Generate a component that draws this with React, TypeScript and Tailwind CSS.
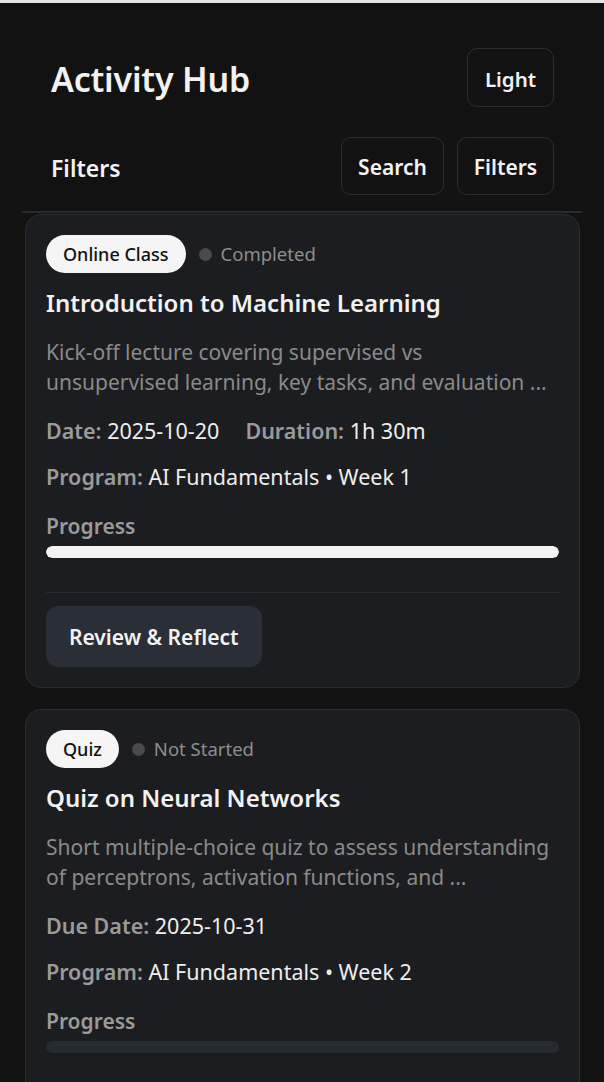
import React from 'react';

type Activity = {
  kind: string;
  status: string;
  title: string;
  description: string;
  meta: { label: string; value: string }[][];
  progress: number;
  action?: string;
};

const ACTIVITIES: Activity[] = [
  {
    kind: 'Online Class',
    status: 'Completed',
    title: 'Introduction to Machine Learning',
    description: 'Kick-off lecture covering supervised vs\nunsupervised learning, key tasks, and evaluation ...',
    meta: [
      [
        { label: 'Date:', value: '2025-10-20' },
        { label: 'Duration:', value: '1h 30m' },
      ],
      [{ label: 'Program:', value: 'AI Fundamentals • Week 1' }],
    ],
    progress: 100,
    action: 'Review & Reflect',
  },
  {
    kind: 'Quiz',
    status: 'Not Started',
    title: 'Quiz on Neural Networks',
    description: 'Short multiple-choice quiz to assess understanding\nof perceptrons, activation functions, and ...',
    meta: [
      [{ label: 'Due Date:', value: '2025-10-31' }],
      [{ label: 'Program:', value: 'AI Fundamentals • Week 2' }],
    ],
    progress: 0,
    action: 'Start Quiz',
  },
];

const ActivityCard = ({ item }: { item: Activity }) => (
  <div className="rounded-[16px] border border-[#2a2d33] bg-[#1c1d21] px-[20px] pt-[20px] pb-[20px]">
    {/* Badge + status */}
    <div className="flex items-center gap-[13px]">
      <span className="rounded-full bg-[#f5f5f5] px-[17px] h-[38px] flex items-center text-[18px] font-medium text-[#111]">
        {item.kind}
      </span>
      <span className="flex items-center gap-[9px] text-[18.5px] text-[#8d8d8d]">
        <span className="w-[13px] h-[13px] rounded-full bg-[#4a4a4a]" />
        {item.status}
      </span>
    </div>

    <h2 className="mt-[10px] text-[24px] leading-[40px] font-semibold text-[#f2f2f2]">{item.title}</h2>

    <p className="mt-[14px] text-[21px] leading-[30px] text-[#8a8a8a] whitespace-pre overflow-hidden">
      {item.description}
    </p>

    <div className="mt-[11px] flex flex-col">
      {item.meta.map((row, i) => (
        <div key={i} className="flex gap-[26px] text-[21.5px] leading-[46px]">
          {row.map((m) => (
            <span key={m.label}>
              <span className="font-semibold text-[#9a9a9a]">{m.label}</span>{' '}
              <span className="text-[#eeeeee]">{m.value}</span>
            </span>
          ))}
        </div>
      ))}
    </div>

    <div className="mt-[6px] text-[21px] leading-[40px] font-semibold text-[#9a9a9a]">Progress</div>
    <div className="h-[12px] w-full rounded-full bg-[#262a31] overflow-hidden">
      <div className="h-full rounded-full bg-[#f3f3f3]" style={{ width: `${item.progress}%` }} />
    </div>

    {item.action && (
      <div className="mt-[34px] border-t border-[#2a2d33] pt-[13px]">
        <button className="h-[61px] rounded-[12px] bg-[#2a2e36] px-[23px] pt-[2px] text-[21px] font-semibold text-[#f2f2f2]">
          {item.action}
        </button>
      </div>
    )}
  </div>
);

export default function App() {
  return (
    <div
      className="min-h-[1082px] w-full bg-[#121212] text-white"
      style={{ fontFamily: '"Noto Sans", "Open Sans", sans-serif' }}
    >
      <div className="h-[3px] bg-[#e3e3e3]" />

      {/* Header */}
      <div className="flex items-center justify-between pl-[51px] pr-[50px] pt-[45px]">
        <h1 className="mt-[4px] text-[34px] font-semibold tracking-[-0.2px] text-[#f2f2f2]">Activity Hub</h1>
        <button className="h-[59px] w-[87px] rounded-[10px] border border-[#2a2d33] pt-[3px] text-[20.5px] font-semibold text-[#f2f2f2]">
          Light
        </button>
      </div>

      <div className="mt-[30px] flex items-center justify-between pl-[51px] pr-[50px]">
        <span className="mt-[4px] text-[23px] font-semibold text-[#f2f2f2]">Filters</span>
        <div className="flex gap-[13px]">
          <button className="h-[58px] w-[103px] rounded-[10px] border border-[#2a2d33] pt-[4px] text-[21px] font-semibold text-[#f2f2f2]">
            Search
          </button>
          <button className="h-[58px] w-[97px] rounded-[10px] border border-[#2a2d33] pt-[4px] text-[21px] font-semibold text-[#f2f2f2]">
            Filters
          </button>
        </div>
      </div>

      <div className="mx-[22px] mt-[16px] border-t-2 border-[#272b31]" />

      <div className="flex flex-col gap-[21px] pl-[25px] pr-[24px] pt-[1px]">
        {ACTIVITIES.map((a) => (
          <ActivityCard key={a.title} item={a} />
        ))}
      </div>
    </div>
  );
}
